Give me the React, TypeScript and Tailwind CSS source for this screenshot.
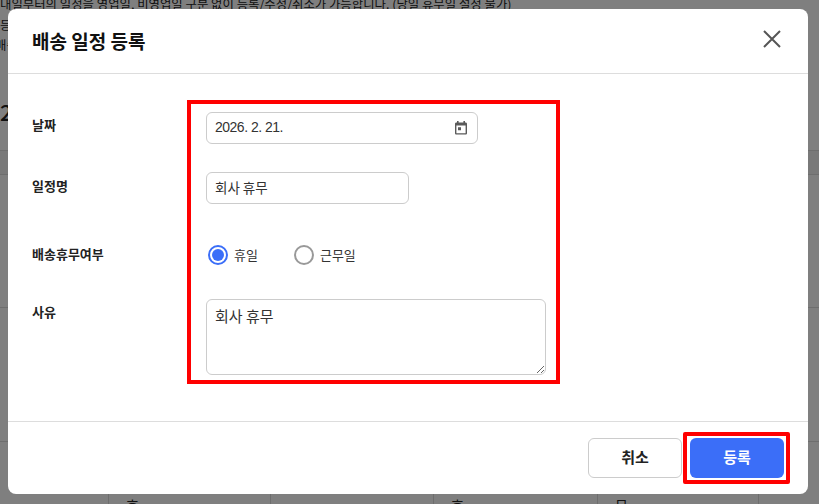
import React from "react";

const font = { fontFamily: '"Noto Sans CJK KR", "Liberation Sans", sans-serif' };

const CalendarIcon = () => (
  <svg width="14" height="14" viewBox="0 0 14 14" className="text-[#5a5a5a]">
    <path
      fill="currentColor"
      fillRule="evenodd"
      d="M3 0h1.6v1.4h4.8V0H11v1.4h.6c.8 0 1.4.6 1.4 1.4v9.4c0 .8-.6 1.4-1.4 1.4H2.4c-.8 0-1.4-.6-1.4-1.4V2.8c0-.8.6-1.4 1.4-1.4H3V0zM2.4 4.6v7.6h9.2V4.6H2.4zM4 6.2h3v3H4v-3z"
    />
  </svg>
);

const CloseIcon = () => (
  <svg width="20" height="20" viewBox="0 0 20 20" className="text-[#555555]">
    <path d="M2 2l16 16M18 2L2 18" stroke="currentColor" strokeWidth="2" fill="none" />
  </svg>
);

const Background = () => (
  <div className="h-[504px] overflow-hidden bg-white text-[12.4px] text-[#222222]">
    <p className="-mt-[6px] h-[21px] whitespace-nowrap leading-[21px]">
      내일부터의 일정을 영업일, 비영업일 구분 없이 등록/수정/취소가 가능합니다. (당일 휴무일 설정 불가)
    </p>
    <p className="h-[20px] leading-[20px]">등</p>
    <p className="-ml-[5px] h-[20px] leading-[20px]">배송</p>
    <p className="mt-[42px] text-[22px] font-medium leading-[28px]">2026</p>
    <div className="mt-[25px] h-[24px] border-t border-[#dddddd] bg-[#f3f3f3]" />
    <div className="h-[133px] border-t border-[#dddddd]" />
    <div className="h-[134px] border-t border-[#dddddd]" />
    <div className="flex h-[70px] border-t border-[#dddddd] pl-[108px] text-[14px]">
      <div className="w-[162px] border-l border-[#dddddd] pl-[17px] pt-[53px]">휴</div>
      <div className="w-[163px] border-l border-[#dddddd]" />
      <div className="w-[164px] border-l border-[#dddddd] pl-[17px] pt-[53px]">휴</div>
      <div className="w-[162px] border-x border-[#dddddd] pl-[17px] pt-[53px]">무</div>
    </div>
  </div>
);

const Row = ({
  label,
  className,
  labelClass,
  children,
}: {
  label: string;
  className: string;
  labelClass: string;
  children: React.ReactNode;
}) => (
  <div className={`flex items-start ${className}`}>
    <label
      className={`w-[174px] shrink-0 text-[13px] font-bold leading-[19px] text-[#222222] ${labelClass}`}
    >
      {label}
    </label>
    {children}
  </div>
);

const Radio = ({ label, checked }: { label: string; checked?: boolean }) => (
  <span className="flex items-center gap-[6px] text-[13px] text-[#333333]">
    {checked ? (
      <span className="flex h-[20px] w-[20px] items-center justify-center rounded-full border-2 border-[#3b6ef8]">
        <span className="h-[12px] w-[12px] rounded-full bg-[#3b6ef8]" />
      </span>
    ) : (
      <span className="h-[20px] w-[20px] rounded-full border-2 border-[#999999]" />
    )}
    {label}
  </span>
);

export default function App() {
  return (
    <div className="relative h-[504px] w-[819px] overflow-hidden" style={font}>
      <Background />

      <div className="absolute inset-0 bg-black/50 pl-[8px] pt-[9px]">
        <div className="relative flex h-[485px] w-[800px] flex-col rounded-[8px] bg-white">
          <header className="flex h-[65px] shrink-0 items-center justify-between border-b border-[#dddddd] pl-[24px] pr-[26px]">
            <h2 className="text-[19px] font-bold text-[#111111]">배송 일정 등록</h2>
            <button className="mt-[-4px]">
              <CloseIcon />
            </button>
          </header>

          <div className="flex-1 pl-[24px] pt-[38px]">
            <Row label="날짜" className="h-[60px]" labelClass="pt-[3px]">
              <div className="flex h-[32px] w-[272px] items-center justify-between rounded-[6px] border border-[#cccccc] pl-[8px] pr-[9px] text-[#333333]">
                <span className="pb-[2px] font-['Liberation_Sans'] text-[14px] tracking-[-0.5px]">
                  2026. 2. 21.
                </span>
                <CalendarIcon />
              </div>
            </Row>
            <Row label="일정명" className="h-[64px]" labelClass="pt-[4px]">
              <input
                readOnly
                value="회사 휴무"
                className="h-[32px] w-[203px] rounded-[6px] border border-[#cccccc] px-[8px] pb-[3px] text-[13.5px] text-[#333333] outline-none"
              />
            </Row>
            <Row label="배송휴무여부" className="h-[63px]" labelClass="pt-[8px]">
              <div className="ml-[2px] flex h-[38px] items-center gap-[36px]">
                <Radio label="휴일" checked />
                <Radio label="근무일" />
              </div>
            </Row>
            <Row label="사유" className="" labelClass="pt-[3px]">
              <textarea
                readOnly
                value="회사 휴무"
                className="h-[76px] w-[340px] rounded-[6px] border border-[#cccccc] px-[8px] py-[5px] text-[15px] text-[#333333] outline-none"
              />
            </Row>
          </div>

          <footer className="flex h-[73px] shrink-0 items-center justify-end gap-[8px] border-t border-[#dddddd] pr-[24px]">
            <button className="h-[40px] w-[94px] rounded-[6px] border border-[#cccccc] bg-white pb-[1px] text-[15px] font-bold text-[#222222]">
              취소
            </button>
            <button className="h-[40px] w-[94px] rounded-[6px] bg-[#3b6ef8] pb-[1px] text-[15px] font-bold text-white">
              등록
            </button>
          </footer>
        </div>
      </div>

      <div className="absolute left-[187px] top-[100px] h-[284px] w-[373px] border-4 border-[#ff0000]" />
      <div className="absolute left-[683px] top-[432px] h-[52px] w-[107px] rounded-[2px] border-4 border-[#ff0000]" />
    </div>
  );
}
